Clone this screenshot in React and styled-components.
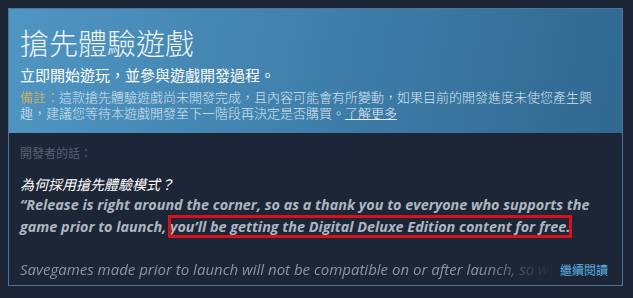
import React from 'react';
import styled, { createGlobalStyle } from 'styled-components';

const GlobalStyle = createGlobalStyle`
  html, body {
    margin: 0;
    padding: 0;
    background: #1b2536;
  }
  body {
    font-family: "Open Sans", "Noto Sans CJK TC", sans-serif;
  }
`;

const Page = styled.div`
  width: 633px;
  height: 298px;
  padding: 8px 10px 0 8px;
  box-sizing: border-box;
  overflow: hidden;
`;

const Card = styled.section`
  border: 1px solid #4d7499;
  background: #1c2637;
  height: 278px;
  box-sizing: border-box;
  overflow: hidden;
`;

const Header = styled.div`
  background: linear-gradient(100deg, #5096c3 0%, #3f7fab 50%, #306890 100%);
  padding: 16px 11px 7px 11px;
  height: 124px;
  box-sizing: border-box;
`;

const Title = styled.h1`
  margin: 0;
  font-family: "Noto Sans CJK TC", sans-serif;
  font-weight: 300;
  font-size: 29px;
  line-height: 34px;
  color: #eef4f8;
`;

const Subtitle = styled.div`
  margin-top: 6px;
  font-family: "Noto Sans CJK TC", sans-serif;
  font-weight: 400;
  font-size: 15px;
  line-height: 20px;
  color: #ffffff;
`;

const Note = styled.p`
  margin: 4px 0 0 0;
  font-family: "Noto Sans CJK TC", sans-serif;
  font-weight: 300;
  font-size: 13px;
  line-height: 16px;
  color: #d6e4ef;
`;

const NoteLabel = styled.span`
  color: #e8b84c;
`;

const LearnMore = styled.a`
  color: #e4eef5;
  text-decoration: underline;
`;

const Body = styled.div`
  padding: 12px 11px 0 11px;
`;

const DevLabel = styled.div`
  font-family: "Noto Sans CJK TC", sans-serif;
  font-size: 12px;
  line-height: 16px;
  color: #56616d;
`;

const Question = styled.div`
  margin-top: 14px;
  font-family: "Noto Sans CJK TC", sans-serif;
  font-style: italic;
  font-size: 14px;
  line-height: 18px;
  color: #ffffff;
`;

const Quote = styled.p`
  margin: 1px 0 0 0;
  font-style: italic;
  font-weight: 700;
  font-size: 14.4px;
  line-height: 22px;
  color: #adb6c0;
`;

const Marked = styled.span`
  outline: 3px solid #d9111b;
  outline-offset: -1px;
`;

const MoreRow = styled.div`
  margin-top: 21px;
  display: flex;
  align-items: center;
`;

const Faded = styled.div`
  width: 534px;
  white-space: nowrap;
  overflow: hidden;
  font-style: italic;
  font-size: 15px;
  line-height: 20px;
  color: #8a95a1;
  mask-image: linear-gradient(to right, #000 86%, transparent 100%);
  -webkit-mask-image: linear-gradient(to right, #000 86%, transparent 100%);
`;

const ReadMore = styled.a`
  margin-left: 6px;
  font-family: "Noto Sans CJK TC", sans-serif;
  font-size: 12px;
  color: #5fb1e3;
  text-decoration: none;
`;

export default function App() {
  return (
    <>
      <GlobalStyle />
      <Page>
        <Card>
          <Header>
            <Title>搶先體驗遊戲</Title>
            <Subtitle>立即開始遊玩，並參與遊戲開發過程。</Subtitle>
            <Note>
              <NoteLabel>備註：</NoteLabel>這款搶先體驗遊戲尚未開發完成，且內容可能會有所變動，如果目前的開發進度未使您產生興趣，建議您等待本遊戲開發至下一階段再決定是否購買。<LearnMore href="#">了解更多</LearnMore>
            </Note>
          </Header>
          <Body>
            <DevLabel>開發者的話：</DevLabel>
            <Question>為何採用搶先體驗模式？</Question>
            <Quote>
              “Release is right around the corner, so as a thank you to everyone who supports the game prior to launch, <Marked>you’ll be getting the Digital Deluxe Edition content for free.</Marked>
            </Quote>
            <MoreRow>
              <Faded>Savegames made prior to launch will not be compatible on or after launch, so we recommend</Faded>
              <ReadMore href="#">繼續閱讀</ReadMore>
            </MoreRow>
          </Body>
        </Card>
      </Page>
    </>
  );
}
